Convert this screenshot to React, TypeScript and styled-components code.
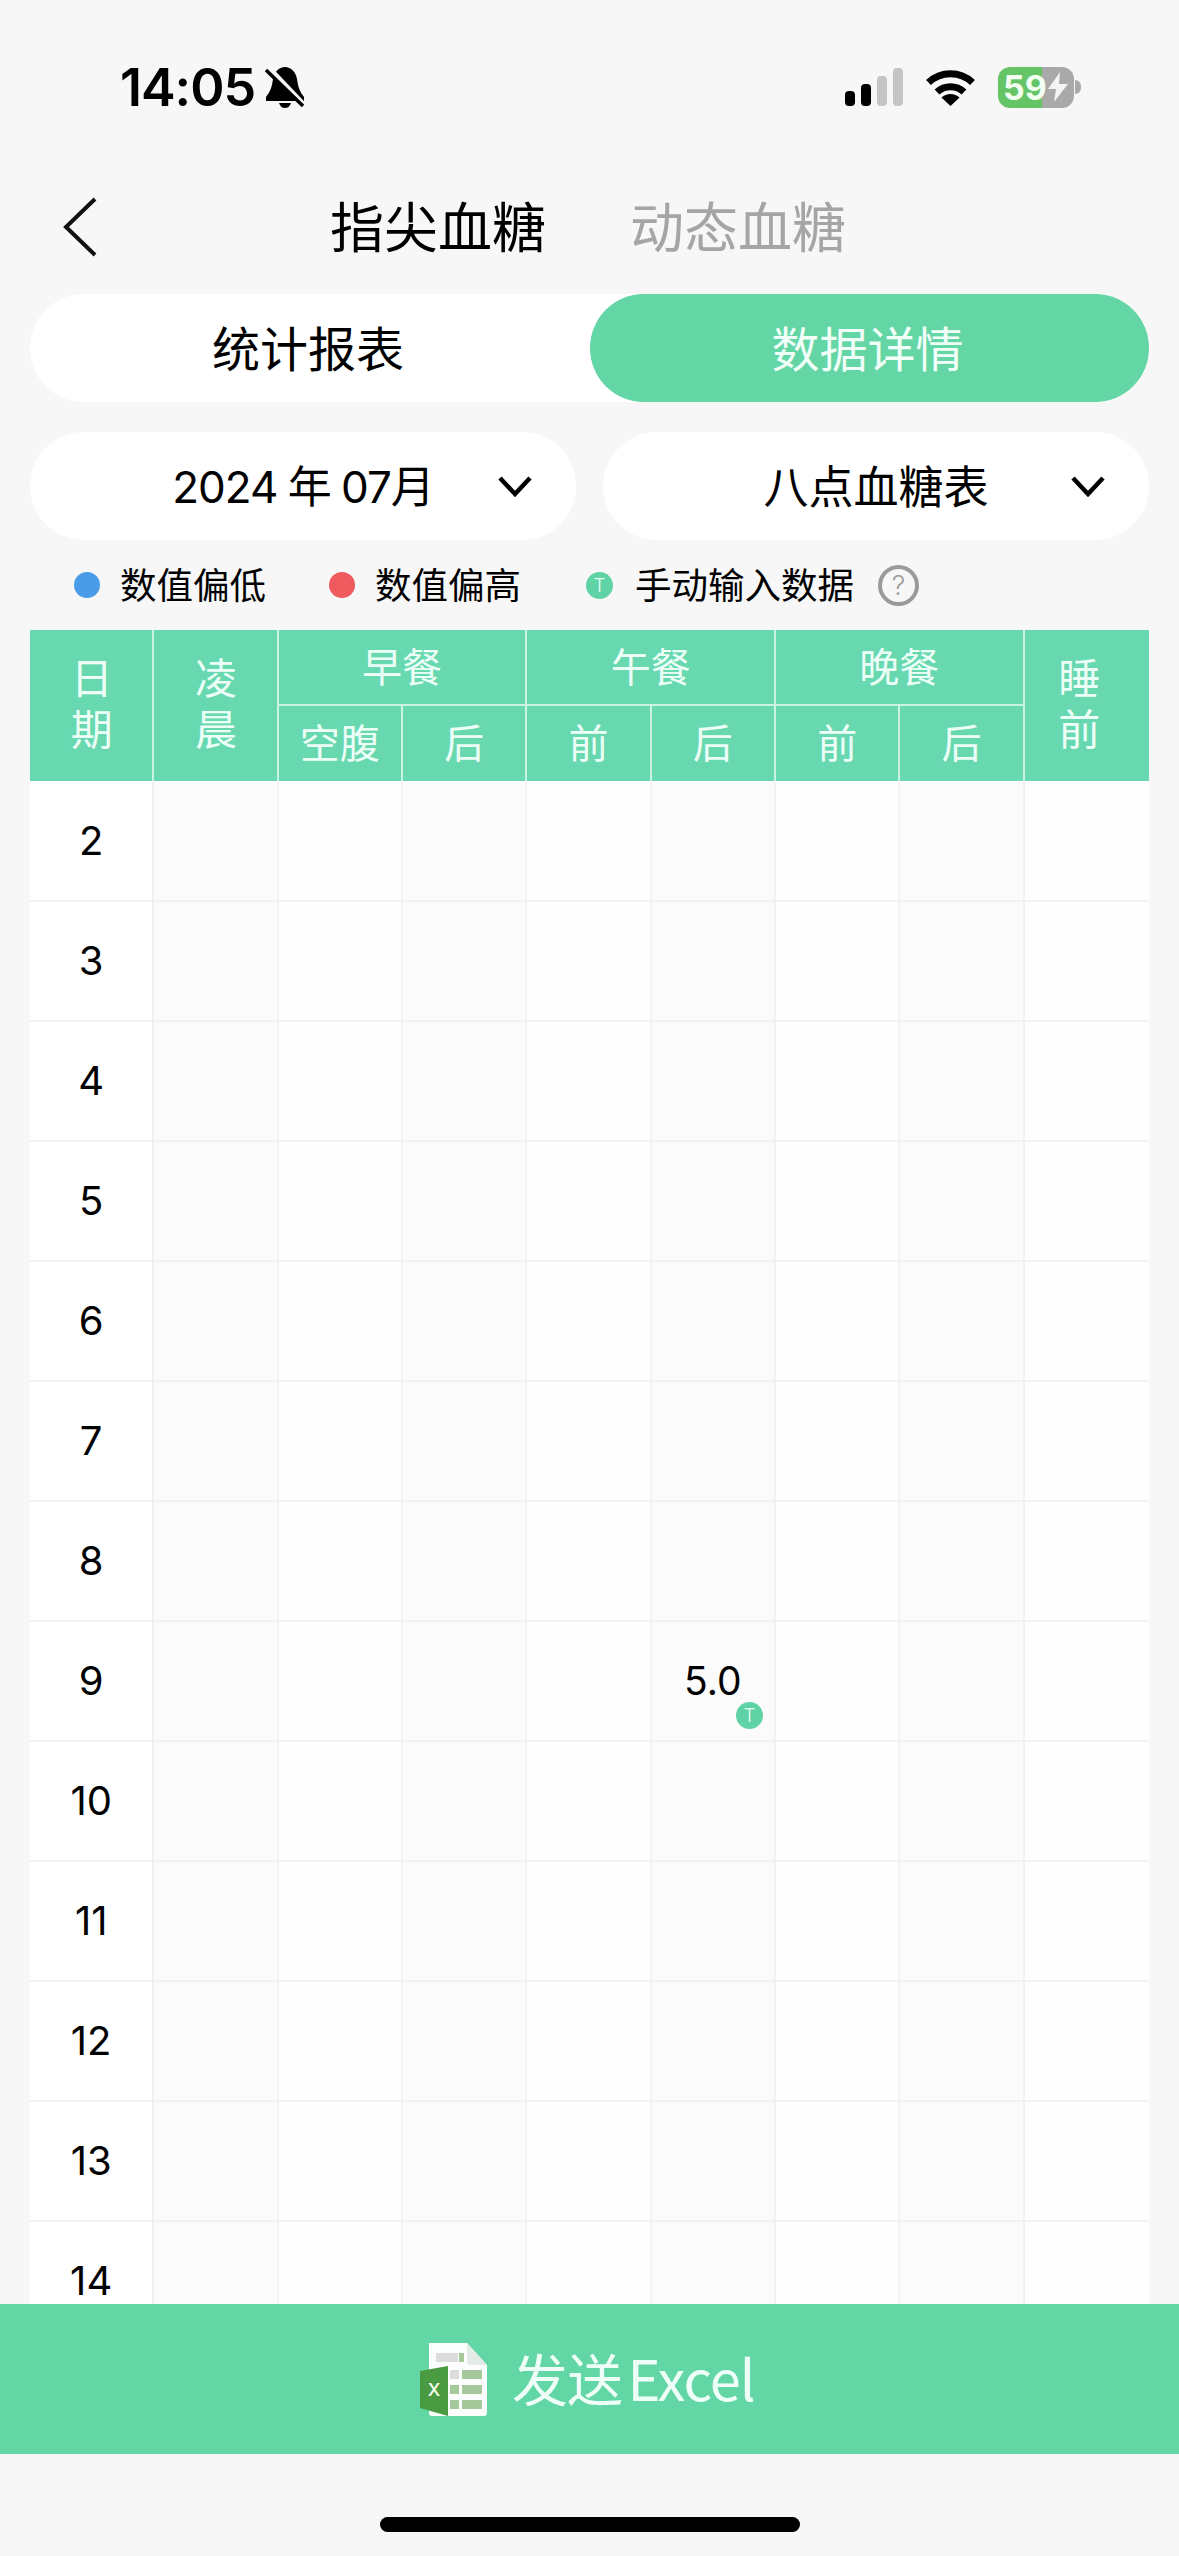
import React from 'react';
import styled, { createGlobalStyle } from 'styled-components';

const CJK = `"Noto Sans CJK SC", "Noto Sans", sans-serif`;
const LATIN = `Inter, "Noto Sans CJK SC", sans-serif`;

const GlobalStyle = createGlobalStyle`
  html, body {
    margin: 0;
    padding: 0;
    background: #f7f7f7;
  }
  * {
    box-sizing: border-box;
  }
`;

const Page = styled.div`
  display: flex;
  flex-direction: column;
  width: 1179px;
  height: 2556px;
  overflow: hidden;
  background: #f7f7f7;
  font-family: ${CJK};
  color: #000;
`;

const StatusBar = styled.div`
  display: flex;
  flex: none;
  justify-content: space-between;
  height: 174px;
  padding: 64px 98px 0 120px;
`;

const StatusLeft = styled.div`
  display: flex;
  align-items: center;
  gap: 10px;
  height: 46px;
`;

const Time = styled.span`
  font-family: ${LATIN};
  font-size: 52px;
  font-weight: 600;
  letter-spacing: -1px;
`;

const StatusRight = styled.div`
  display: flex;
  align-items: center;
  height: 46px;
`;

const Signal = styled.svg`
  width: 58px;
  height: 38px;
  margin-right: 22px;
`;

const Wifi = styled.svg`
  width: 51px;
  height: 38px;
  margin-right: 22px;
`;

const Battery = styled.div`
  display: flex;
  align-items: center;
  width: 76px;
  height: 41px;
  padding-left: 5px;
  border-radius: 12px;
  background: linear-gradient(90deg, #65c466 58%, #a9a9a9 58%);
  color: #f1fff1;
  font-family: ${LATIN};
  font-size: 34px;
  font-weight: 700;
`;

const BatteryNub = styled.div`
  width: 6px;
  height: 14px;
  margin-left: 1px;
  border-radius: 0 6px 6px 0;
  background: #a9a9a9;
`;

const Nav = styled.div`
  display: flex;
  flex: none;
  align-items: center;
  height: 106px;
  padding-left: 62px;
`;

const BackIcon = styled.svg`
  width: 36px;
  height: 62px;
  margin-right: 232px;
`;

const NavTitle = styled.span<{ $active?: boolean }>`
  margin-right: 84px;
  padding-bottom: 5px;
  color: ${p => (p.$active ? '#000' : '#a5a5a5')};
  font-size: 54px;
  line-height: 70px;
`;

const Tabs = styled.div`
  display: grid;
  flex: none;
  grid-template-columns: 560px 559px;
  height: 108px;
  margin: 14px 30px 0;
  border-radius: 54px;
  background: #fff;
`;

const Tab = styled.div<{ $active?: boolean }>`
  display: flex;
  align-items: center;
  justify-content: center;
  padding: 0 4px 5px 0;
  border-radius: 54px;
  background: ${p => (p.$active ? '#64d6a6' : 'transparent')};
  color: ${p => (p.$active ? '#f0fff8' : '#000')};
  font-size: 48px;
`;

const Selects = styled.div`
  display: grid;
  flex: none;
  grid-template-columns: 546px 546px;
  gap: 27px;
  margin: 30px 30px 0;
`;

const Select = styled.div`
  display: grid;
  grid-template-columns: 1fr auto 1fr;
  align-items: center;
  height: 108px;
  border-radius: 54px;
  background: #fff;
  font-family: ${LATIN};
  font-size: 45px;
  white-space: nowrap;
`;

const SelectLabel = styled.span`
  grid-column: 2;
  padding-bottom: 4px;
`;

const DateLabel = styled(SelectLabel)`
  font-size: 44px;
  letter-spacing: -1px;
  word-spacing: -1px;
`;

const SelectChevron = styled.svg`
  justify-self: end;
  width: 36px;
  height: 24px;
  margin-right: 43px;
`;

const Legend = styled.div`
  display: flex;
  flex: none;
  align-items: center;
  height: 90px;
  padding-left: 74px;
  font-size: 36.5px;
`;

const Dot = styled.span<{ $color: string }>`
  flex: none;
  width: 26px;
  height: 26px;
  margin-right: 20px;
  border-radius: 50%;
  background: ${p => p.$color};
`;

const LegendLabel = styled.span<{ $gap: number }>`
  margin-right: ${p => p.$gap}px;
  padding-bottom: 3px;
  line-height: 50px;
`;

const InputBadge = styled.span`
  display: flex;
  align-items: center;
  justify-content: center;
  width: 27px;
  height: 27px;
  border-radius: 50%;
  background: #5fd3a6;
  color: #eafff6;
  font-family: ${LATIN};
  font-size: 18px;
  font-weight: 300;
`;

const LegendBadge = styled(InputBadge)`
  flex: none;
  margin-right: 22px;
`;

const Help = styled.span`
  display: flex;
  flex: none;
  align-items: center;
  justify-content: center;
  width: 41px;
  height: 41px;
  border: 4px solid #9a9a9a;
  border-radius: 50%;
  color: #9a9a9a;
  font-family: ${LATIN};
  font-size: 27px;
  font-weight: 300;
`;

const Table = styled.div`
  flex: 1;
  min-height: 0;
  margin: 0 30px;
  overflow: hidden;
  background: #fff;
`;

const Head = styled.div`
  display: grid;
  grid-template-columns: repeat(9, 1fr);
  grid-template-rows: 76px 75px;
  margin-bottom: 1px;
  background: #68d8b0;
  color: #ecfff7;
  font-size: 40px;
`;

const HeadCell = styled.div<{ $wide?: boolean }>`
  display: flex;
  align-items: center;
  justify-content: center;
  ${p => p.$wide && 'grid-column: span 2; border-bottom: 2px solid #c9f3e3;'}
  padding: 0 4px 5px;
  border-right: 2px solid #c9f3e3;
  line-height: 50px;
`;

// the tall cells read top to bottom, one character per line
const TallCell = styled.div<{ $last?: boolean }>`
  display: flex;
  grid-row: span 2;
  align-items: center;
  justify-content: center;
  padding-top: 4px;
  padding-right: ${p => (p.$last ? '16px' : '0')};
  border-right: ${p => (p.$last ? 'none' : '2px solid #c9f3e3')};
  font-size: 42px;
  letter-spacing: 9px;
  line-height: 1;
  writing-mode: vertical-rl;
  text-orientation: upright;
`;

const Row = styled.div`
  display: grid;
  grid-template-columns: repeat(9, 1fr);
  height: 120px;
`;

const DateCell = styled.div`
  display: flex;
  align-items: center;
  justify-content: center;
  padding-bottom: 2px;
  border-right: 2px solid #f0f0f0;
  border-bottom: 2px solid #f2f2f2;
  background: #fff;
  font-family: ${LATIN};
  font-size: 40px;
`;

const Cell = styled.div<{ $last?: boolean; $shaded?: boolean }>`
  position: relative;
  display: flex;
  align-items: center;
  justify-content: center;
  padding-bottom: 2px;
  border-right: ${p => (p.$last ? 'none' : '2px solid #f2f2f2')};
  border-bottom: 2px solid #f2f2f2;
  background: ${p => (p.$shaded ? '#fbfbfb' : '#fefefe')};
  font-family: ${LATIN};
  font-size: 39px;
`;

const CellBadge = styled(InputBadge)`
  position: absolute;
  right: 11px;
  bottom: 11px;
`;

const SendBar = styled.div`
  display: flex;
  flex: none;
  align-items: center;
  height: 150px;
  padding-left: 420px;
  background: #63d6a6;
  color: #eefff8;
  font-size: 56px;
`;

const ExcelIcon = styled.svg`
  width: 70px;
  height: 76px;
  margin-right: 22px;
`;

const SendLabel = styled.span`
  padding-bottom: 5px;
  letter-spacing: -1px;
  word-spacing: -6px;
`;

const HomeArea = styled.div`
  display: flex;
  flex: none;
  justify-content: center;
  height: 102px;
  padding-top: 63px;
`;

const HomeIndicator = styled.div`
  width: 420px;
  height: 15px;
  border-radius: 8px;
  background: #000;
`;

const days = [2, 3, 4, 5, 6, 7, 8, 9, 10, 11, 12, 13, 14];
const slots = 8;

const App = () => (
  <Page>
    <GlobalStyle />
    <StatusBar>
      <StatusLeft>
        <Time>14:05</Time>
        <svg width="40" height="41" viewBox="0 0 40 41">
          <path d="M20 0c6 0 11 5 12 12 1 8 3 13 7 18v4H1v-4c4-5 6-10 7-18C9 5 14 0 20 0z" fill="#000" />
          <path d="M14 36h12c-1 3-3 5-6 5s-5-2-6-5z" fill="#000" />
          <path d="M4 1l36 38" stroke="#f7f7f7" strokeWidth="5" />
          <path d="M1 3l37 36" stroke="#000" strokeWidth="3.5" />
        </svg>
      </StatusLeft>
      <StatusRight>
        <Signal viewBox="0 0 58 38">
          <rect x="0" y="23" width="10" height="15" rx="4" fill="#000" />
          <rect x="16" y="16" width="10" height="22" rx="4" fill="#000" />
          <rect x="32" y="8" width="10" height="30" rx="4" fill="#c4c4c4" />
          <rect x="48" y="0" width="10" height="38" rx="4" fill="#c4c4c4" />
        </Signal>
        <Wifi viewBox="0 0 51 38">
          <path d="M3.5 14.5a32 32 0 0 1 44 0" fill="none" stroke="#000" strokeWidth="7" />
          <path d="M12 24a20 20 0 0 1 27 0" fill="none" stroke="#000" strokeWidth="7" />
          <path d="M25.5 38L16.5 29.500a13 13 0 0 1 18 0z" fill="#000" />
        </Wifi>
        <Battery>
          59
          <svg width="22" height="30" viewBox="0 0 22 30">
            <path d="M13 0L1 17h8l-2 13L21 12h-9z" fill="#f4f4f4" />
          </svg>
        </Battery>
        <BatteryNub />
      </StatusRight>
    </StatusBar>

    <Nav>
      <BackIcon viewBox="0 0 36 62">
        <polyline points="33,3 4,31 33,59" fill="none" stroke="#111" strokeWidth="4" />
      </BackIcon>
      <NavTitle $active>指尖血糖</NavTitle>
      <NavTitle>动态血糖</NavTitle>
    </Nav>

    <Tabs>
      <Tab>统计报表</Tab>
      <Tab $active>数据详情</Tab>
    </Tabs>

    <Selects>
      <Select>
        <DateLabel>2024 年 07月</DateLabel>
        <SelectChevron viewBox="0 0 36 24">
          <polyline points="3,4 18,20 33,4" fill="none" stroke="#000" strokeWidth="4.500" />
        </SelectChevron>
      </Select>
      <Select>
        <SelectLabel>八点血糖表</SelectLabel>
        <SelectChevron viewBox="0 0 36 24">
          <polyline points="3,4 18,20 33,4" fill="none" stroke="#000" strokeWidth="4.500" />
        </SelectChevron>
      </Select>
    </Selects>

    <Legend>
      <Dot $color="#4a9ce8" />
      <LegendLabel $gap={63}>数值偏低</LegendLabel>
      <Dot $color="#ee5a5e" />
      <LegendLabel $gap={65}>数值偏高</LegendLabel>
      <LegendBadge>T</LegendBadge>
      <LegendLabel $gap={24}>手动输入数据</LegendLabel>
      <Help>?</Help>
    </Legend>

    <Table>
      <Head>
        <TallCell>日期</TallCell>
        <TallCell>凌晨</TallCell>
        <HeadCell $wide>早餐</HeadCell>
        <HeadCell $wide>午餐</HeadCell>
        <HeadCell $wide>晚餐</HeadCell>
        <TallCell $last>睡前</TallCell>
        <HeadCell>空腹</HeadCell>
        <HeadCell>后</HeadCell>
        <HeadCell>前</HeadCell>
        <HeadCell>后</HeadCell>
        <HeadCell>前</HeadCell>
        <HeadCell>后</HeadCell>
      </Head>
      {days.map(day => (
        <Row key={day}>
          <DateCell>{day}</DateCell>
          {Array.from({ length: slots }, (_, i) => (
            <Cell key={i} $last={i === slots - 1} $shaded={i % 2 === 0}>
              {day === 9 && i === 4 && (
                <>
                  5.0
                  <CellBadge>T</CellBadge>
                </>
              )}
            </Cell>
          ))}
        </Row>
      ))}
    </Table>

    <SendBar>
      <ExcelIcon viewBox="0 0 70 76">
        <path d="M9 2h38l20 22v48a3 3 0 0 1-3 3H12a3 3 0 0 1-3-3z" fill="#fbfefc" />
        <path d="M47 2v18a4 4 0 0 0 4 4h16z" fill="#e3ebe6" />
        <rect x="16" y="12" width="22" height="9" fill="#dcdcdc" />
        <rect x="39" y="12" width="5" height="9" fill="#a5c99a" />
        <rect x="30" y="29" width="9" height="9" fill="#dcdcdc" />
        <rect x="42" y="29" width="20" height="9" fill="#a5c99a" />
        <rect x="30" y="44" width="9" height="9" fill="#a5c99a" />
        <rect x="42" y="44" width="20" height="9" fill="#a5c99a" />
        <rect x="30" y="59" width="9" height="9" fill="#a5c99a" />
        <rect x="42" y="59" width="20" height="9" fill="#a5c99a" />
        <path d="M0 30l28-5v50L0 67z" fill="#4a9a41" />
        <text x="14" y="55" textAnchor="middle" fill="#f4fff0" fontSize="24" fontFamily="Inter, sans-serif">x</text>
      </ExcelIcon>
      <SendLabel>发送 Excel</SendLabel>
    </SendBar>

    <HomeArea>
      <HomeIndicator />
    </HomeArea>
  </Page>
);

export default App;
